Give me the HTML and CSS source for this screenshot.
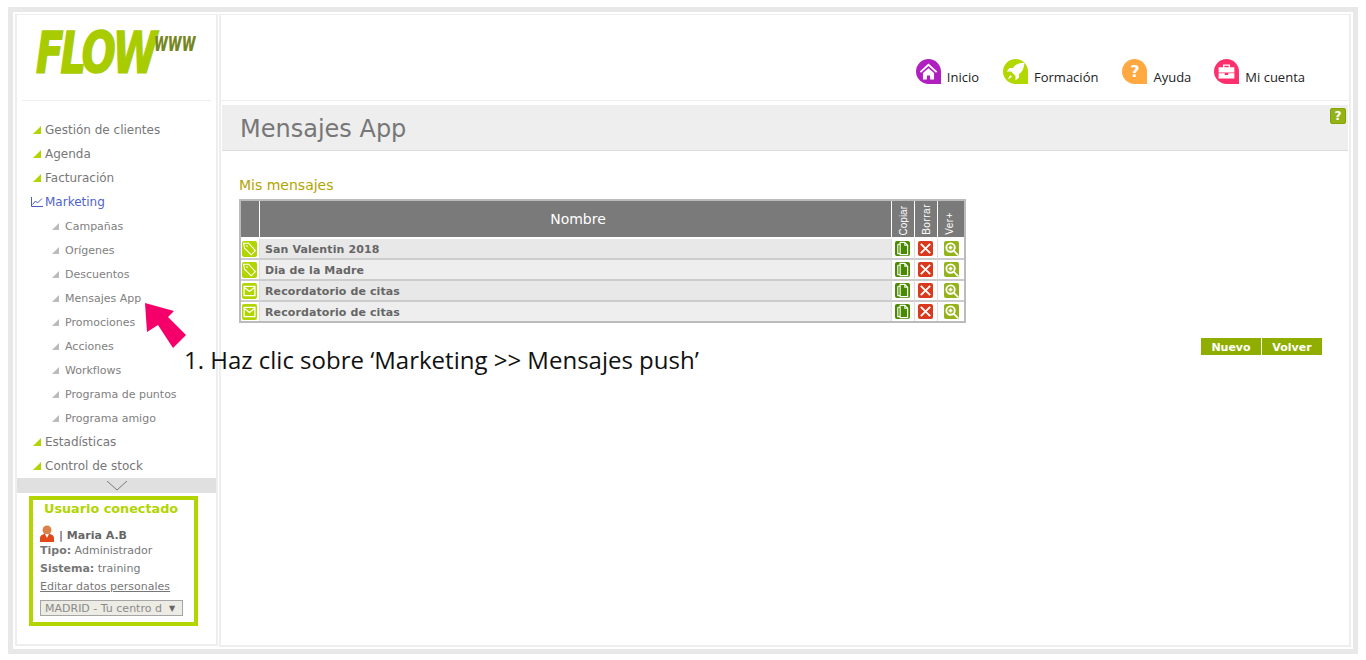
FILE: index.html
```html
<!DOCTYPE html>
<html lang="es">
<head>
<meta charset="utf-8">
<title>Mensajes App</title>
<link rel="stylesheet" href="styles.css">
</head>
<body>
<div class="frame">
  <aside class="sidebar">
    <div class="logo"><span class="logo-flow">FLOW</span><span class="logo-www">www</span></div>
    <ul class="menu">
      <li class="item"><i class="tri"></i>Gestión de clientes</li>
      <li class="item"><i class="tri"></i>Agenda</li>
      <li class="item"><i class="tri"></i>Facturación</li>
      <li class="item active"><svg class="chart" viewBox="0 0 12 10" width="12" height="10"><path d="M.5 0v9.500H12M1.500 7.500 4.500 4l2 2L11 1.500" fill="none" stroke="#4a5cc0" stroke-width="1"/></svg>Marketing</li>
      <li class="sub"><i class="tri grey"></i>Campañas</li>
      <li class="sub"><i class="tri grey"></i>Orígenes</li>
      <li class="sub"><i class="tri grey"></i>Descuentos</li>
      <li class="sub"><i class="tri grey"></i>Mensajes App</li>
      <li class="sub"><i class="tri grey"></i>Promociones</li>
      <li class="sub"><i class="tri grey"></i>Acciones</li>
      <li class="sub"><i class="tri grey"></i>Workflows</li>
      <li class="sub"><i class="tri grey"></i>Programa de puntos</li>
      <li class="sub"><i class="tri grey"></i>Programa amigo</li>
      <li class="item"><i class="tri"></i>Estadísticas</li>
      <li class="item"><i class="tri"></i>Control de stock</li>
    </ul>
    <div class="scroll"><svg viewBox="0 0 20 10" width="20" height="10"><path d="M0 0l10 9L20 0" fill="none" stroke="#777" stroke-width="1"/></svg></div>
    <div class="user">
      <h3 class="user-title">Usuario conectado</h3>
      <div class="user-name"><svg viewBox="0 0 14 17" width="14" height="17"><circle cx="7" cy="5" r="4.500" fill="#d9824a"/><path d="M0 17v-4q0-3 4-4h6q4 1 4 4v4z" fill="#e2491a"/><path d="M5 9h4l-2 4z" fill="#fff"/></svg><b>| Maria A.B</b></div>
      <div class="user-row"><b>Tipo:</b> Administrador</div>
      <div class="user-row"><b>Sistema:</b> training</div>
      <div class="user-row"><a class="user-link" href="#">Editar datos personales</a></div>
      <div class="select"><span class="select-text">MADRID - Tu centro d</span><span class="select-arrow">▼</span></div>
    </div>
  </aside>
  <main class="main">
    <header class="topbar">
      <a class="nav"><span class="bubble purple"><svg viewBox="0 0 24 24" width="19" height="19"><path d="M12 2 1 12l1.500 1.500L12 5l9.500 8.500L23 12zM5 14v8h5v-5h4v5h5v-8l-7-6z" fill="#fff"/></svg></span>Inicio</a>
      <a class="nav"><span class="bubble lime"><svg viewBox="0 0 24 24" width="21" height="21"><path d="M22 2c-6 0-10 2-13 6H5l-3 4h5l5 5v5l4-3v-4c4-3 6-7 6-13zM6 16l-3 5 5-3z" fill="#fff"/></svg></span>Formación</a>
      <a class="nav"><span class="bubble orange"><b class="q">?</b></span>Ayuda</a>
      <a class="nav"><span class="bubble pink"><svg viewBox="0 0 24 24" width="21" height="21"><path d="M8 7V4h8v3h-1.500V5.500h-5V7zM3 7h18v6H3zM3 14h7v2h4v-2h7v6H3z" fill="#fff"/></svg></span>Mi cuenta</a>
    </header>
    <section class="titlebar">
      <h1 class="title">Mensajes App</h1>
      <span class="help">?</span>
    </section>
    <section class="content">
      <h2 class="subtitle">Mis mensajes</h2>
      <table class="grid">
        <thead>
          <tr>
            <th class="c-icon"></th>
            <th class="c-name">Nombre</th>
            <th class="c-act"><span class="vert">Copiar</span></th>
            <th class="c-act"><span class="vert spaced">Borrar</span></th>
            <th class="c-ver"><span class="vert spaced">Ver+</span></th>
          </tr>
        </thead>
        <tbody>
          <tr class="odd"><td class="cell-icon"><span class="type"><svg viewBox="0 0 18 18"><path d="M2 2h6l8 9-5 5-8-8z" fill="none" stroke="#fff" stroke-width="1.300"/><circle cx="6" cy="5.500" r="1" fill="#fff"/></svg></span></td><td class="cell-name">San Valentin 2018</td><td class="cell-act"><span class="act copy"><svg viewBox="0 0 16 16"><path d="M3 3.500h2M3 3.500v10h2M5.500 1.500h5l3 3v10h-8zM10.500 1.500v3h3" fill="none" stroke="#fff" stroke-width="1.200"/></svg></span></td><td class="cell-act"><span class="act del"><svg viewBox="0 0 16 16"><path d="M3 3l10 10M13 3 3 13" stroke="#fff" stroke-width="2"/></svg></span></td><td class="cell-act"><span class="act view"><svg viewBox="0 0 16 16"><circle cx="7" cy="7" r="4.500" fill="none" stroke="#fff" stroke-width="2"/><path d="M10.500 10.500 15 15M5 7h4M7 5v4" stroke="#fff" stroke-width="1.800"/></svg></span></td></tr>
          <tr class="even"><td class="cell-icon"><span class="type"><svg viewBox="0 0 18 18"><path d="M2 2h6l8 9-5 5-8-8z" fill="none" stroke="#fff" stroke-width="1.300"/><circle cx="6" cy="5.500" r="1" fill="#fff"/></svg></span></td><td class="cell-name">Dia de la Madre</td><td class="cell-act"><span class="act copy"><svg viewBox="0 0 16 16"><path d="M3 3.500h2M3 3.500v10h2M5.500 1.500h5l3 3v10h-8zM10.500 1.500v3h3" fill="none" stroke="#fff" stroke-width="1.200"/></svg></span></td><td class="cell-act"><span class="act del"><svg viewBox="0 0 16 16"><path d="M3 3l10 10M13 3 3 13" stroke="#fff" stroke-width="2"/></svg></span></td><td class="cell-act"><span class="act view"><svg viewBox="0 0 16 16"><circle cx="7" cy="7" r="4.500" fill="none" stroke="#fff" stroke-width="2"/><path d="M10.500 10.500 15 15M5 7h4M7 5v4" stroke="#fff" stroke-width="1.800"/></svg></span></td></tr>
          <tr class="odd"><td class="cell-icon"><span class="type"><svg viewBox="0 0 18 18"><path d="M2.500 3.500h13v11h-13zM2.500 4.500l6.500 5 6.500-5" fill="none" stroke="#fff" stroke-width="1.500"/></svg></span></td><td class="cell-name">Recordatorio de citas</td><td class="cell-act"><span class="act copy"><svg viewBox="0 0 16 16"><path d="M3 3.500h2M3 3.500v10h2M5.500 1.500h5l3 3v10h-8zM10.500 1.500v3h3" fill="none" stroke="#fff" stroke-width="1.200"/></svg></span></td><td class="cell-act"><span class="act del"><svg viewBox="0 0 16 16"><path d="M3 3l10 10M13 3 3 13" stroke="#fff" stroke-width="2"/></svg></span></td><td class="cell-act"><span class="act view"><svg viewBox="0 0 16 16"><circle cx="7" cy="7" r="4.500" fill="none" stroke="#fff" stroke-width="2"/><path d="M10.500 10.500 15 15M5 7h4M7 5v4" stroke="#fff" stroke-width="1.800"/></svg></span></td></tr>
          <tr class="even"><td class="cell-icon"><span class="type"><svg viewBox="0 0 18 18"><path d="M2.500 3.500h13v11h-13zM2.500 4.500l6.500 5 6.500-5" fill="none" stroke="#fff" stroke-width="1.500"/></svg></span></td><td class="cell-name">Recordatorio de citas</td><td class="cell-act"><span class="act copy"><svg viewBox="0 0 16 16"><path d="M3 3.500h2M3 3.500v10h2M5.500 1.500h5l3 3v10h-8zM10.500 1.500v3h3" fill="none" stroke="#fff" stroke-width="1.200"/></svg></span></td><td class="cell-act"><span class="act del"><svg viewBox="0 0 16 16"><path d="M3 3l10 10M13 3 3 13" stroke="#fff" stroke-width="2"/></svg></span></td><td class="cell-act"><span class="act view"><svg viewBox="0 0 16 16"><circle cx="7" cy="7" r="4.500" fill="none" stroke="#fff" stroke-width="2"/><path d="M10.500 10.500 15 15M5 7h4M7 5v4" stroke="#fff" stroke-width="1.800"/></svg></span></td></tr>
        </tbody>
      </table>
      <div class="buttons"><a class="btn">Nuevo</a><a class="btn">Volver</a></div>
    </section>
  </main>
  <svg class="arrow" viewBox="0 0 42 46" width="42" height="46"><path d="M0 0 29 8 23 14 41 32 28 45 13 22 2 29z" fill="#f5006a"/></svg>
  <p class="caption">1. Haz clic sobre ‘Marketing &gt;&gt; Mensajes push’</p>
</div>
</body>
</html>
```
FILE: styles.css
```css
* { box-sizing: border-box; }
html, body { margin: 0; padding: 0; background: #fff; }
body { font-family: "DejaVu Sans", Verdana, sans-serif; height: 660px; overflow: hidden; }
.frame {
  position: relative;
  display: flex;
  gap: 1px;
  margin: 7px 0 0 8px;
  width: 1350px;
  height: 647px;
  border: 5px solid #e8e8e8;
  padding: 2px;
}
.sidebar {
  width: 203px;
  height: 632px;
  border: 2px solid #eee;
  border-top-width: 1px;
  display: flex;
  flex-direction: column;
}
.logo {
  display: flex;
  align-items: flex-start;
  flex: none;
  height: 86px;
  margin: 0 5px;
  padding: 10px 0 0 14px;
  border-bottom: 1px solid #eee;
}
.logo-flow {
  font: italic 700 40px/40px "DejaVu Sans", sans-serif;
  letter-spacing: -2.800px;
  width: 118px;
  flex: none;
  white-space: nowrap;
  transform: scale(1, 1.4);
  transform-origin: left top;
  color: #a8cc00;
  -webkit-text-stroke: 1.200px #a8cc00;
}
.logo-www {
  font: italic 700 15.500px/16px "DejaVu Sans", sans-serif;
  letter-spacing: -.500px;
  color: #76861e;
  transform: scale(1, 1.7);
  transform-origin: left top;
  margin-top: 4px;
}
.menu { list-style: none; margin: 0; padding: 17px 0 0; flex: none; }
.item, .sub { display: flex; align-items: center; height: 24px; color: #777; white-space: nowrap; }
.item { font-size: 12px; padding-left: 16px; }
.sub { font-size: 11px; padding: 1px 0 0 35px; color: #808080; }
.tri {
  width: 8px;
  height: 8px;
  margin-right: 4px;
  background: #b2d500;
  clip-path: polygon(100% 0, 100% 100%, 0 100%);
}
.tri.grey { width: 7px; height: 7px; margin-right: 6px; background: #bbb; }
.active { color: #4f63c8; padding-left: 14px; }
.chart { margin-right: 2px; }
.scroll { flex: none; height: 15px; margin-bottom: 3px; background: #e0e0e0; display: flex; justify-content: center; align-items: center; }
.user {
  flex: none;
  width: 169px;
  height: 130px;
  margin-left: 12px;
  border: 4px solid #b2d500;
  padding: 1px 7px;
  font-size: 11px;
  color: #777;
}
.user-title { margin: 0 0 7px; font-size: 12.800px; line-height: 16px; font-weight: 700; color: #b2d500; white-space: nowrap; padding-left: 4px; }
.user-name { display: flex; align-items: flex-end; height: 18px; color: #666; gap: 5px; }
.user-row { height: 18px; line-height: 18px; white-space: nowrap; }
.user-link { color: #777; }
.select {
  display: flex;
  align-items: center;
  width: 143px;
  height: 16px;
  margin-top: 4px;
  padding: 0 4px;
  background: #ecebe4;
  border: 1px solid #a5a5a5;
  color: #8a8a8a;
}
.select-text { width: 119px; white-space: nowrap; flex: none; }
.select-arrow { font-size: 8px; margin-left: 5px; color: #666; }
.main { flex: 1; border: 2px solid #eee; border-top-width: 1px; display: flex; flex-direction: column; }
.topbar {
  display: flex;
  align-items: flex-end;
  justify-content: flex-end;
  gap: 24px;
  height: 86px;
  padding: 0 44px 15px 0;
  border-bottom: 1px solid #eee;
  font: 13px/16px "Open Sans", sans-serif;
  color: #222;
}
.nav { display: flex; align-items: flex-end; gap: 6px; }
.nav:last-child { margin-left: -1px; }
.bubble {
  width: 25px;
  height: 25px;
  margin-bottom: 1px;
  border-radius: 50% 50% 0 50%;
  display: flex;
  align-items: center;
  justify-content: center;
}
.purple { background: #b020c0; }
.lime { background: #b2d800; }
.orange { background: #ffa940; }
.pink { background: #ff2e6c; }
.q { color: #fff; font: 700 16px/1 "DejaVu Sans", sans-serif; }
.titlebar {
  display: flex;
  justify-content: space-between;
  align-items: flex-start;
  height: 46px;
  margin: 4px 1px 0 1px;
  background: #eee;
  border-bottom: 1px solid #ddd;
  padding-left: 18px;
}
.title { margin: 8px 0 0; font-size: 24px; line-height: 32px; font-weight: 400; color: #777; }
.help {
  width: 16px;
  height: 16px;
  margin: 3px 2px 0 0;
  background: #94b21a;
  border: 1px solid #86a400;
  border-radius: 2px;
  color: #fff;
  font: 700 12px/14px "DejaVu Sans", sans-serif;
  text-align: center;
}
.content { padding: 26px 0 0 18px; }
.subtitle { margin: 0 0 5px; font-size: 14px; line-height: 17px; font-weight: 400; color: #b3a400; }
.grid {
  border-collapse: separate;
  border-spacing: 0;
  border: 2px solid #bbb;
  background: #fff;
  width: 727px;
  table-layout: fixed;
}
.grid th {
  background: #7a7a7a;
  background-clip: padding-box;
  color: #fff;
  padding: 0;
  height: 38px;
  border-right: 1px solid #fff;
  border-bottom: 2px solid #fff;
  font-weight: 400;
  font-size: 14px;
}
.grid th:last-child { border-right: 0; }
.c-icon { width: 19px; }
.grid .c-name { padding-left: 5px; }
.c-act { width: 23px; }
.c-ver { width: 26px; }
.grid .c-act, .grid .c-ver { vertical-align: bottom; padding-bottom: 2px; line-height: 0; }
.grid .c-ver { padding-right: 4px; }
.vert {
  display: inline-block;
  writing-mode: vertical-rl;
  transform: rotate(180deg);
  font: 10px/11px "Liberation Sans", sans-serif;
}
.spaced { letter-spacing: .5px; }
.grid td { background: #fff; padding: 0; height: 21px; text-align: center; border-right: 1px solid #ddd; border-bottom: 2px solid #ccc; }
.grid tr:last-child td { height: 19px; border-bottom: 0; }
.grid td:last-child { border-right: 0; }
.grid .cell-name { background: #eee; padding: 2px 0 0 5px; text-align: left; font-size: 11px; font-weight: 700; color: #666; letter-spacing: .1px; }
.grid .odd .cell-name { background: #e8e8e8; }
.type { display: flex; width: 15px; height: 16px; margin: auto auto auto 1px; background: #b2d500; border-radius: 2px; }
.act { display: flex; width: 15px; height: 15px; margin: auto auto auto 3px; border-radius: 2px; }
.cell-act:last-child .act { margin-left: 6px; }
.type svg, .act svg { width: 100%; height: 100%; }
.copy { background: #4a8a00; }
.del { background: #d93a1e; }
.view { background: #94b21a; }
.buttons { display: flex; justify-content: flex-end; gap: 1px; margin: 15px 27px 0 0; }
.btn {
  width: 60px;
  height: 17px;
  background: #8fae00;
  color: #fff;
  font-size: 11px;
  line-height: 19px;
  font-weight: 700;
  text-align: center;
}
.arrow { position: absolute; left: 132px; top: 291px; }
.caption {
  position: absolute;
  left: 171px;
  top: 333px;
  margin: 0;
  font: 24px/30px "Open Sans", sans-serif;
  color: #111;
  white-space: nowrap;
}
```
